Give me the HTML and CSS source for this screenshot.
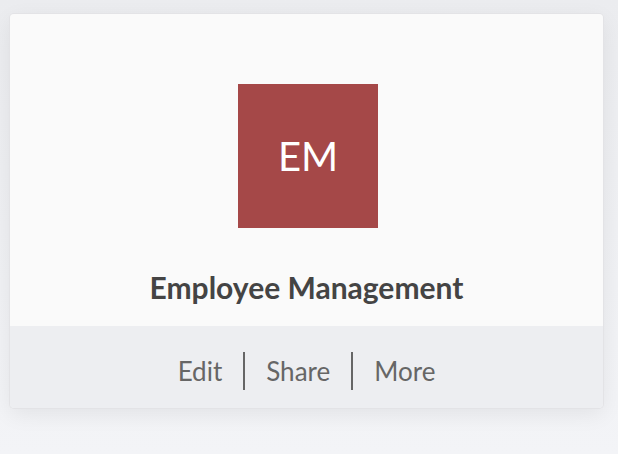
FILE: index.html
```html
<!DOCTYPE html>
<html>
<head>
<meta charset="utf-8">
<link rel="stylesheet" href="styles.css">
</head>
<body>
<div class="card">
  <div class="card-body">
    <div class="avatar">EM</div>
    <div class="title">Employee Management</div>
  </div>
  <div class="card-footer">
    <span class="action">Edit</span>
    <span class="sep"></span>
    <span class="action">Share</span>
    <span class="sep"></span>
    <span class="action">More</span>
  </div>
</div>
</body>
</html>
```
FILE: styles.css
```css
html, body {
  margin: 0;
  padding: 0;
}
body {
  width: 618px;
  height: 454px;
  background: linear-gradient(#ebecef, #f3f4f7);
  font-family: Lato, "Open Sans", sans-serif;
  padding: 14px 15px 0 10px;
  box-sizing: border-box;
  overflow: hidden;
}
.card {
  border-radius: 4px;
  overflow: hidden;
  box-shadow: 0 0 0 1px #e3e3e6, 0 6px 22px rgba(0, 0, 0, 0.07);
}
.card-body {
  background: #fafafa;
  height: 312px;
  display: flex;
  flex-direction: column;
  align-items: center;
  padding-top: 70px;
  box-sizing: border-box;
}
.avatar {
  width: 140px;
  height: 144px;
  margin-left: 3px;
  background: #a54848;
  color: #fff;
  font-size: 40px;
  display: flex;
  align-items: center;
  justify-content: center;
}
.title {
  margin-top: 41px;
  font-size: 30px;
  font-weight: 700;
  color: #444;
  line-height: 36px;
}
.card-footer {
  background: #edeef1;
  height: 82px;
  display: flex;
  align-items: center;
  justify-content: center;
  padding-top: 8px;
  box-sizing: border-box;
}
.action {
  font-size: 26px;
  color: #666;
  padding: 0 21px;
}
.sep {
  width: 2px;
  height: 38px;
  background: #666;
}
```
